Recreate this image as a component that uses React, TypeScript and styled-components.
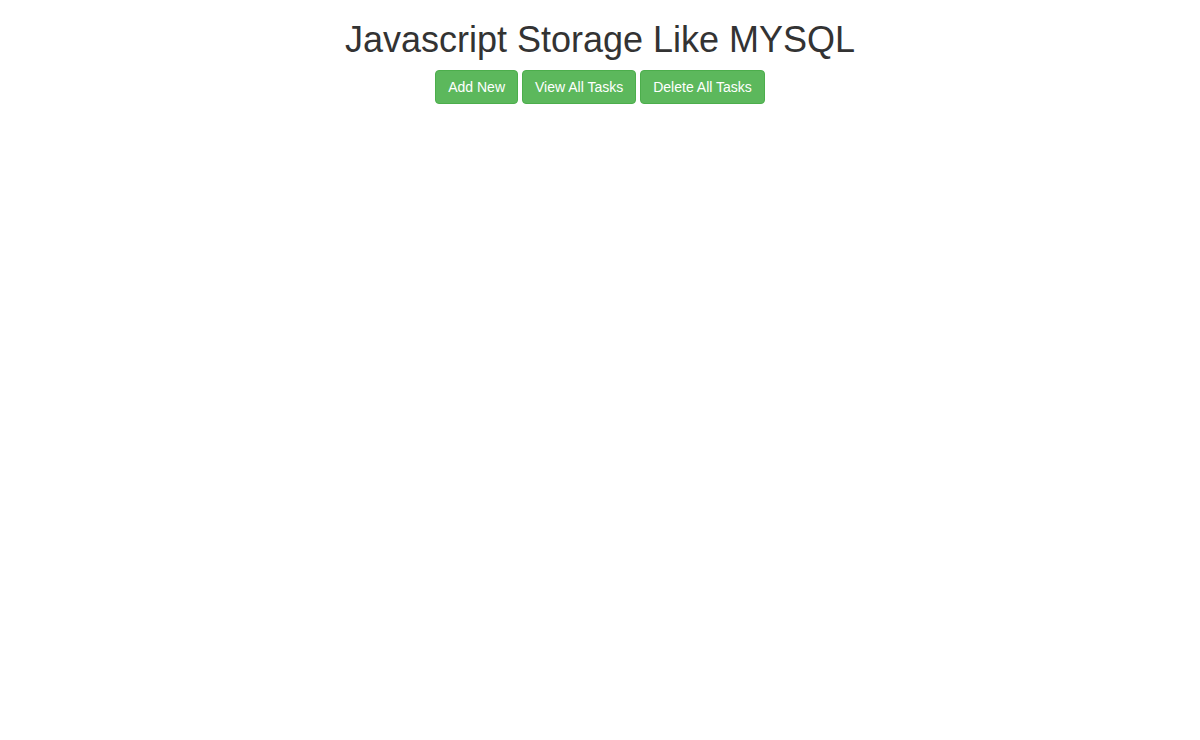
import React from 'react';
import styled, { createGlobalStyle } from 'styled-components';

const GlobalStyle = createGlobalStyle`
  * { box-sizing: border-box; }
  body {
    margin: 0;
    background: #fff;
    color: #333;
    font-family: 'Liberation Sans', Arial, Helvetica, sans-serif;
    font-size: 14px;
    line-height: 1.42857143;
  }
`;

const Container = styled.div`
  text-align: center;
  padding: 0 15px;
`;

const Title = styled.h1`
  margin: 20px 0 10px;
  font-size: 36px;
  font-weight: 500;
  line-height: 1.1;
  color: #333;
`;

const Toolbar = styled.div`
  display: flex;
  justify-content: center;
  gap: 4px;
`;

const Button = styled.button`
  display: inline-block;
  padding: 6px 12px;
  font-family: inherit;
  font-size: 14px;
  line-height: 1.42857143;
  color: #fff;
  background: #5cb85c;
  border: 1px solid #4cae4c;
  border-radius: 4px;
  cursor: pointer;
  &:hover {
    background: #449d44;
    border-color: #398439;
  }
`;

const App: React.FC = () => (
  <>
    <GlobalStyle />
    <Container>
      <Title>Javascript Storage Like MYSQL</Title>
      <Toolbar>
        <Button>Add New</Button>
        <Button>View All Tasks</Button>
        <Button>Delete All Tasks</Button>
      </Toolbar>
    </Container>
  </>
);

export default App;
